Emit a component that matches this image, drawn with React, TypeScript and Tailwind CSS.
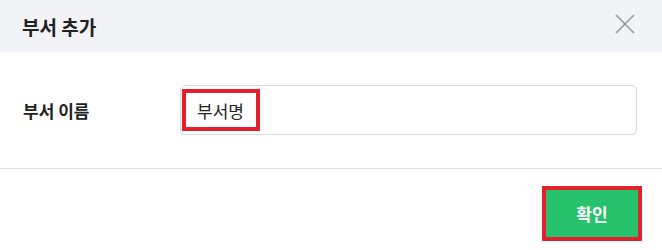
export default function App() {
  return (
    <div className="w-[662px] h-[250px] bg-white overflow-hidden font-['Noto_Sans_CJK_KR','Noto_Sans',sans-serif] text-[#222]">
      <div className="h-[52px] bg-[#f2f3f7] flex items-center justify-between pl-[22px] pr-[27px]">
        <div className="text-[19px] font-bold leading-none">부서 추가</div>
        <svg width="20" height="20" viewBox="0 0 20 20" className="text-[#9a9a9a] -mt-[5px]">
          <path d="M1 1 L19 19 M19 1 L1 19" stroke="currentColor" strokeWidth="1.6" fill="none" />
        </svg>
      </div>
      <div className="h-[116px] flex items-center pl-[23px] pr-[25px]">
        <div className="w-[157px] text-[17px] font-bold leading-none">부서 이름</div>
        <div className="flex-1 h-[50px] border border-[#d9d9d9] rounded-[5px] flex items-center pl-[1px]">
          <span className="h-[42px] w-[78px] border-[4px] border-[#e3202b] flex items-center pl-[11px] text-[17px] leading-none">
            부서명
          </span>
        </div>
      </div>
      <div className="border-t border-[#dcdcdc]" />
      <div className="flex justify-end pr-[20px] pt-[17px]">
        <div className="w-[100px] h-[55px] border-[4px] border-[#e3202b] bg-[#27c26c] flex items-center justify-center text-white text-[17px] font-bold leading-none">
          확인
        </div>
      </div>
    </div>
  );
}
